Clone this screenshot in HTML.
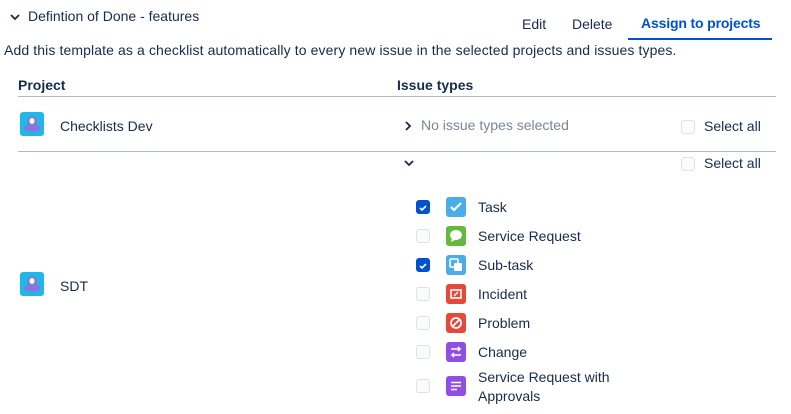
<!DOCTYPE html>
<html><head><style>
body{margin:0;width:791px;height:414px;background:#fff;font-family:"Liberation Sans",sans-serif;color:#172b4d;font-size:14px;position:relative;overflow:hidden}
.a{position:absolute;white-space:nowrap}
.cb{position:absolute;width:12px;height:12px;border:1px solid #dfe1e6;border-radius:3px;background:#fafbfc}
.cb.on{background:#0052cc;border-color:#0052cc}
.ic{position:absolute;width:20px;height:20px;border-radius:3px;left:446px}
.pi{position:absolute;width:24px;height:24px;border-radius:3px;background:#1fb8e8}
</style></head><body>
<svg class="a" style="left:10px;top:13px" width="10" height="8"><path d="M1 2l4 4 4-4" stroke="#172b4d" stroke-width="1.8" fill="none"/></svg>
<div class="a" style="left:28px;top:8px">Defintion of Done - features</div>
<div class="a" style="left:522px;top:16px">Edit</div>
<div class="a" style="left:572px;top:16px">Delete</div>
<div class="a" style="left:641px;top:15px;color:#0052cc;font-weight:bold;letter-spacing:-0.15px">Assign to projects</div>
<div class="a" style="left:628px;top:38px;width:144px;height:2px;background:#0052cc"></div>
<div class="a" style="left:4px;top:42px;letter-spacing:0.11px">Add this template as a checklist automatically to every new issue in the selected projects and issues types.</div>
<div class="a" style="left:18px;top:77px;font-weight:bold">Project</div>
<div class="a" style="left:397px;top:77px;font-weight:bold">Issue types</div>
<div class="a" style="left:18px;top:96px;width:758px;height:1px;background:#b3b9c4"></div>
<div class="pi" style="left:20px;top:112px"><svg width="24" height="24"><ellipse cx="12" cy="16" rx="8" ry="4" fill="#8777d9"/><ellipse cx="12" cy="10" rx="5" ry="6" fill="#8777d9"/><ellipse cx="12" cy="9" rx="2.5" ry="3" fill="#fff"/></svg></div>
<div class="a" style="left:60px;top:118px">Checklists Dev</div>
<svg class="a" style="left:404px;top:121px" width="8" height="10"><path d="M2 1l4 4-4 4" stroke="#172b4d" stroke-width="1.8" fill="none"/></svg>
<div class="a" style="left:421px;top:117px;color:#7a869a">No issue types selected</div>
<div class="cb" style="left:681px;top:120px"></div>
<div class="a" style="left:704px;top:118px">Select all</div>
<div class="a" style="left:18px;top:151px;width:758px;height:1px;background:#b3b9c4"></div>
<svg class="a" style="left:404px;top:159px" width="10" height="8"><path d="M1 2l4 4 4-4" stroke="#172b4d" stroke-width="1.8" fill="none"/></svg>
<div class="cb" style="left:681px;top:157px"></div>
<div class="a" style="left:704px;top:155px">Select all</div>
<div class="pi" style="left:20px;top:272px"><svg width="24" height="24"><ellipse cx="12" cy="16" rx="8" ry="4" fill="#8777d9"/><ellipse cx="12" cy="10" rx="5" ry="6" fill="#8777d9"/><ellipse cx="12" cy="9" rx="2.5" ry="3" fill="#fff"/></svg></div>
<div class="a" style="left:60px;top:278px">SDT</div>

<div class="cb on" style="left:416px;top:200px"><svg width="12" height="12"><path d="M3 6l2 2 4-4" stroke="#fff" stroke-width="1.6" fill="none"/></svg></div>
<div class="ic" style="top:197px;background:#4bade8"><svg width="20" height="20"><path d="M5 10l3 3 7-7" stroke="#fff" stroke-width="2.2" fill="none"/></svg></div>
<div class="a" style="left:478px;top:199px">Task</div>

<div class="cb" style="left:416px;top:229px"></div>
<div class="ic" style="top:226px;background:#63ba3c"><svg width="20" height="20"><ellipse cx="10" cy="9" rx="6" ry="5" fill="#fff"/><path d="M6 12l-1 4 4-2z" fill="#fff"/></svg></div>
<div class="a" style="left:478px;top:228px">Service Request</div>

<div class="cb on" style="left:416px;top:258px"><svg width="12" height="12"><path d="M3 6l2 2 4-4" stroke="#fff" stroke-width="1.6" fill="none"/></svg></div>
<div class="ic" style="top:255px;background:#4bade8"><svg width="20" height="20"><rect x="4" y="4" width="8" height="8" rx="1" fill="none" stroke="#fff" stroke-width="1.6"/><rect x="8" y="8" width="8" height="8" rx="1" fill="#fff"/></svg></div>
<div class="a" style="left:478px;top:257px">Sub-task</div>

<div class="cb" style="left:416px;top:287px"></div>
<div class="ic" style="top:284px;background:#e5493a"><svg width="20" height="20"><rect x="5" y="6" width="10" height="8" fill="none" stroke="#fff" stroke-width="1.6"/><path d="M8 12l4-4" stroke="#fff" stroke-width="1.5"/></svg></div>
<div class="a" style="left:478px;top:286px">Incident</div>

<div class="cb" style="left:416px;top:316px"></div>
<div class="ic" style="top:313px;background:#e5493a"><svg width="20" height="20"><circle cx="10" cy="10" r="5" fill="none" stroke="#fff" stroke-width="1.8"/><path d="M7 13l6-6" stroke="#fff" stroke-width="1.8"/></svg></div>
<div class="a" style="left:478px;top:315px">Problem</div>

<div class="cb" style="left:416px;top:345px"></div>
<div class="ic" style="top:342px;background:#904ee2"><svg width="20" height="20"><path d="M5 7h9M12 5l2 2-2 2M15 13H6M8 11l-2 2 2 2" stroke="#fff" stroke-width="1.6" fill="none"/></svg></div>
<div class="a" style="left:478px;top:344px">Change</div>

<div class="cb" style="left:416px;top:379px"></div>
<div class="ic" style="top:376px;background:#904ee2"><svg width="20" height="20"><path d="M5 6.5h10M5 10h10M5 13.5h6" stroke="#fff" stroke-width="1.6"/></svg></div>
<div class="a" style="left:478px;top:369px">Service Request with</div>
<div class="a" style="left:478px;top:388px">Approvals</div>
</body></html>
